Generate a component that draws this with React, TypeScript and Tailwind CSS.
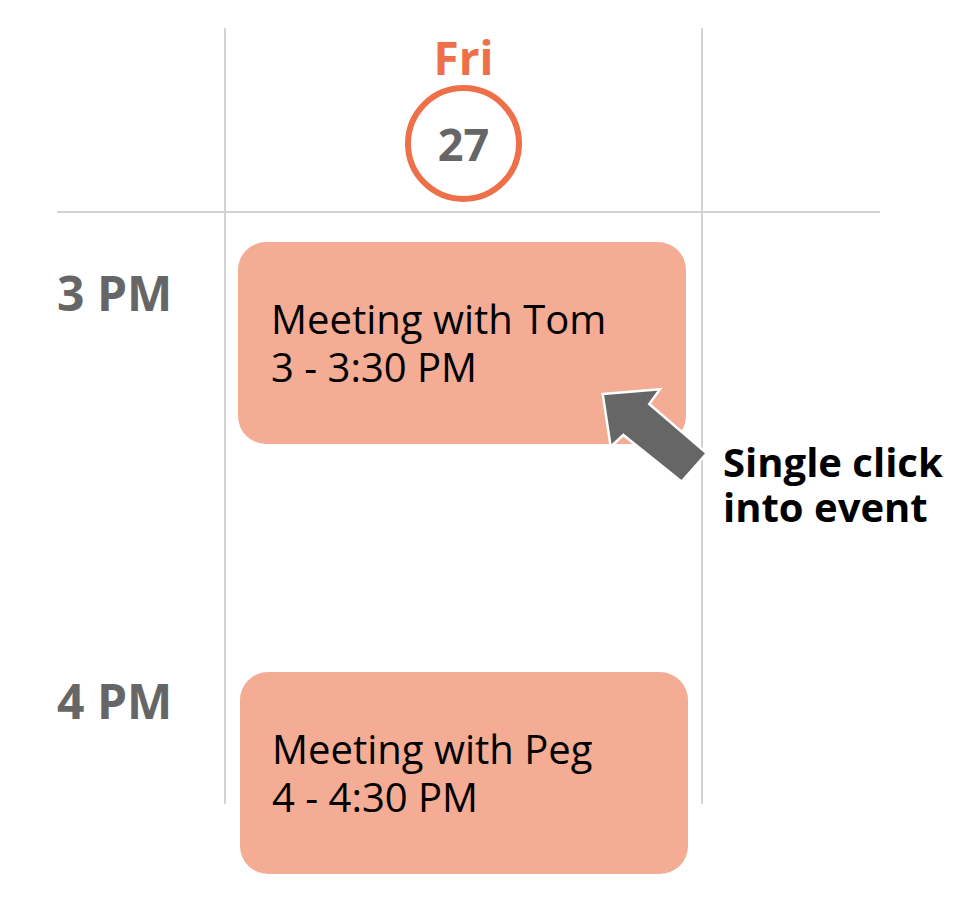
import React from "react";

const Arrow = () => (
  <svg
    className="absolute left-[590px] top-[380px]"
    width="130"
    height="110"
    viewBox="0 0 130 110"
  >
    <polygon
      points="12.7,14 70,9.3 59.3,24 116.7,73.3 91.7,101.7 33.3,55 20.7,66.7"
      fill="#666666"
      stroke="#ffffff"
      strokeWidth="2.5"
      strokeLinejoin="miter"
    />
  </svg>
);

const EventCard = ({ title, time, className }: { title: string; time: string; className: string }) => (
  <div className={`w-[448px] h-[202px] rounded-[28px] bg-[#f4ac94] pt-[53px] text-[40px] leading-[48px] text-black ${className}`}>
    <p className="whitespace-nowrap">{title}</p>
    <p className="whitespace-nowrap">{time}</p>
  </div>
);

export default function App() {
  return (
    <div
      className="relative w-[960px] h-[908px] overflow-hidden bg-white"
      style={{ fontFamily: '"Open Sans", "Liberation Sans", sans-serif' }}
    >
      <div className="flex pl-[57px] pt-[28px]">
        {/* time labels */}
        <div className="w-[167px] shrink-0">
          <div className="h-[185px] border-b-2 border-[#d3d3d3]" />
          <p className="mt-[56px] text-[48px] leading-[48px] font-bold text-[#666666] whitespace-nowrap">3 PM</p>
          <p className="mt-[360px] text-[48px] leading-[48px] font-bold text-[#666666] whitespace-nowrap">4 PM</p>
        </div>

        {/* day column */}
        <div className="w-[479px] h-[776px] shrink-0 border-x-2 border-[#d3d3d3]">
          <div className="h-[185px] border-b-2 border-[#d3d3d3] flex flex-col items-center">
            <p className="mt-[6px] text-[46px] leading-[46px] font-bold text-[#ee7049]">Fri</p>
            <div className="mt-[5px] size-[117px] rounded-full border-[6px] border-[#ee7049] flex items-center justify-center">
              <span className="text-[45px] leading-[45px] font-bold text-[#666666]">27</span>
            </div>
          </div>
          <EventCard title="Meeting with Tom" time="3 - 3:30 PM" className="ml-[12px] mt-[29px] pl-[33px]" />
          <EventCard title="Meeting with Peg" time="4 - 4:30 PM" className="ml-[14px] mt-[228px] pl-[32px]" />
        </div>

        {/* right column */}
        <div className="w-[177px] shrink-0">
          <div className="h-[185px] border-b-2 border-[#d3d3d3]" />
          <p className="ml-[20px] mt-[226px] text-[40px] leading-[45px] font-bold text-black whitespace-nowrap">
            Single click
            <br />
            into event
          </p>
        </div>
      </div>
      <Arrow />
    </div>
  );
}
